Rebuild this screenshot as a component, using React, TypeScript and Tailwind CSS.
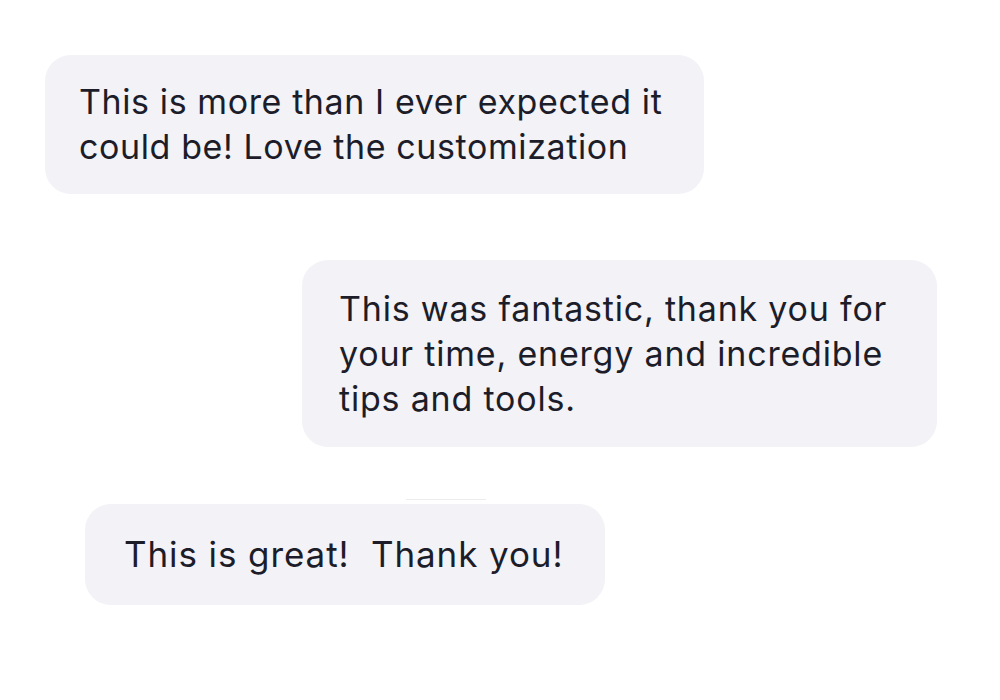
import React from "react";

export default function App() {
  return (
    <div
      className="w-[1000px] h-[700px] bg-white flex flex-col text-[#1d1d29] text-[34px] leading-[45px] tracking-[0.6px]"
      style={{ fontFamily: "Inter, 'Noto Sans', sans-serif" }}
    >
      <div className="mt-[55px] ml-[45px] w-[659px] h-[139px] rounded-[26px] bg-[#f2f2f7] pl-[34px] py-[24px] whitespace-nowrap">
        This is more than I ever expected it
        <br />
        could be! Love the customization
      </div>
      <div className="mt-[66px] ml-[302px] w-[635px] h-[187px] rounded-[26px] bg-[#f2f2f7] pl-[37px] py-[26px] tracking-[0.8px] whitespace-nowrap">
        This was fantastic, thank you for
        <br />
        your time, energy and incredible
        <br />
        tips and tools.
      </div>
      <div className="ml-[406px] mt-[52px] w-[80px] h-[1px] bg-[#ececec]" />
      <div className="mt-[4px] ml-[85px] w-[520px] h-[101px] rounded-[26px] bg-[#f2f2f7] pl-[39px] py-[28px] whitespace-pre text-[35px] tracking-[0.9px]">
        {"This is great!  Thank you!"}
      </div>
    </div>
  );
}
